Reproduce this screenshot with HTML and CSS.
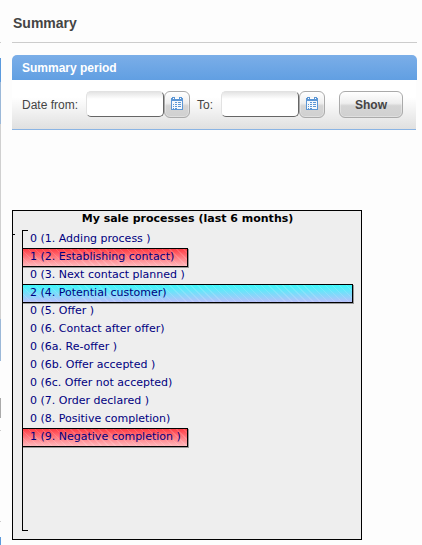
FILE: index.html
```html
<!DOCTYPE html>
<html lang="en">
<head>
    <meta charset="UTF-8">
    <meta name="viewport" content="width=device-width, initial-scale=1.0">
    <title>Summary</title>
    <link rel="stylesheet" href="styles.css">
</head>
<body>

<!-- edge of the side menu -->
<div class="side">
    <div class="side-line"></div>
    <div class="side-head"></div>
    <div class="side-box"></div>
    <div class="side-list"></div>
    <div class="side-box"></div>
    <div class="side-gap"></div>
    <div class="side-button"></div>
    <div class="side-foot"></div>
    <div class="side-end"></div>
</div>

<main>
    <h1>Summary</h1>

    <section class="panel">
        <h2>Summary period</h2>
        <form class="period">
            <label for="date-from">Date from:</label>
            <div class="date">
                <input type="text" id="date-from">
                <button type="button" class="btn btn-cal" aria-label="Choose start date">
                    <svg width="14" height="14" viewBox="0 0 14 14"><use href="#calendar"/></svg>
                </button>
            </div>
            <label for="date-to" class="to">To:</label>
            <div class="date">
                <input type="text" id="date-to">
                <button type="button" class="btn btn-cal" aria-label="Choose end date">
                    <svg width="14" height="14" viewBox="0 0 14 14"><use href="#calendar"/></svg>
                </button>
            </div>
            <button type="button" class="btn btn-show">Show</button>
        </form>
    </section>

    <section class="chart">
        <h3>My sale processes (last 6 months)</h3>
        <div class="plot">
            <ul>
                <li>0 (1. Adding process )</li>
                <li class="bar red" style="width: 50%">1 (2. Establishing contact)</li>
                <li>0 (3. Next contact planned )</li>
                <li class="bar blue" style="width: 100%">2 (4. Potential customer)</li>
                <li>0 (5. Offer )</li>
                <li>0 (6. Contact after offer)</li>
                <li>0 (6a. Re-offer )</li>
                <li>0 (6b. Offer accepted )</li>
                <li>0 (6c. Offer not accepted)</li>
                <li>0 (7. Order declared )</li>
                <li>0 (8. Positive completion)</li>
                <li class="bar red" style="width: 50%">1 (9. Negative completion )</li>
            </ul>
        </div>
    </section>
</main>

<svg class="icons" width="0" height="0">
    <symbol id="calendar" viewBox="0 0 14 14">
        <path fill="#5b96d5" d="M1 1h12v12H1z"/>
        <path fill="#5b96d5" d="M2 0h3v2H2zM9 0h3v2H9z"/>
        <path fill="#fff" d="M3 1h1v1H3zM10 1h1v1h-1zM5 1h4v1H5z"/>
        <path fill="#f4f8fc" d="M2 4h10v8H2z"/>
        <path fill="#5b96d5" d="M5 5h2v1H5zM8 5h3v1H8zM3 7h1v1H3zM5 7h2v1H5zM8 7h3v1H8zM3 9h1v1H3zM5 9h2v1H5zM8 9h3v1H8zM3 11h1v1H3zM5 11h2v1H5z"/>
    </symbol>
</svg>

</body>
</html>
```

FILE: styles.css
```css
body {
    margin: 0;
    min-height: 100vh;
    background: #fdfdfd;
    color: #444;
    font-family: "Liberation Sans", Arial, sans-serif;
    font-size: 12px;
    display: flex;
}

/* Side menu edge */
.side {
    display: flex;
    flex-direction: column;
    flex: none;
    width: 1px;
}

.side-line {
    height: 1px;
    margin: 42px 0 15px;
    background: #ccc;
}

.side-head {
    height: 24px;
    background: #5b9ade;
}

.side-box {
    height: 42px;
    background: #9bb8d8;
}

.side-list {
    height: 195px;
    background: #d0d0d0;
}

.side-gap {
    height: 37px;
}

.side-button {
    height: 20px;
    background: #aaa;
}

.side-foot {
    height: 90px;
    margin: 12px 0 15px;
    border-top: 1px solid #ccc;
    border-bottom: 1px solid #ccc;
}

.side-end {
    flex: 1;
    background: #5b9ade;
}

main {
    flex: 1;
    padding: 0 5px 5px 11px;
}

h1 {
    margin: 0 0 12px;
    padding: 15px 1px 11px;
    border-bottom: 1px solid #ccc;
    font-size: 14px;
    line-height: 16px;
}

/* Period filter */
.panel {
    margin-bottom: 80px;
}

.panel h2 {
    margin: 0;
    padding: 2px 10px 0;
    border-radius: 5px 5px 0 0;
    background: linear-gradient(#7baee8, #619fe2);
    color: #fff;
    font-size: 12px;
    line-height: 23px;
}

.period {
    display: flex;
    align-items: center;
    height: 49px;
    margin-right: 1px;
    padding-left: 10px;
    border-bottom: 1px solid #8ab4e4;
    background: linear-gradient(#fff 35%, #e0e0e0);
}

.period label {
    width: 64px;
}

.period .to {
    width: 24px;
    margin-left: 7px;
}

.date {
    display: flex;
}

.date input {
    box-sizing: border-box;
    width: 78px;
    height: 26px;
    padding: 0 5px;
    border: 1px solid #e2e2e2;
    border-right-color: #666;
    border-bottom-color: #666;
    border-radius: 5px;
    background: linear-gradient(#e4e4e4, #fff 7px);
    font: inherit;
}

.btn {
    box-sizing: border-box;
    height: 27px;
    padding: 0;
    border: 1px solid #aaa;
    border-radius: 6px;
    background: linear-gradient(#fff, #eee 45%, #d5d5d5 55%, #d0d0d0);
    box-shadow: inset 0 0 0 1px #ffffff55;
    color: #444;
    font: bold 12px "Liberation Sans", Arial, sans-serif;
}

.btn-cal {
    display: flex;
    align-items: center;
    justify-content: center;
    width: 26px;
}

.btn-cal svg {
    margin-bottom: 2px;
}

.btn-show {
    width: 64px;
    margin-left: 14px;
}

/* Chart */
.chart {
    box-sizing: border-box;
    max-width: 350px;
    padding: 0 8px 8px 9px;
    border: 1px solid #000;
    background: #eee;
    color: #000080;
    font-family: "DejaVu Sans", Verdana, sans-serif;
    font-size: 11px;
}

.chart h3 {
    margin: 0 0 4px;
    color: #000;
    font-size: 11px;
    line-height: 15px;
    text-align: center;
}

.plot {
    position: relative;
    min-height: 301px;
}

/* axis bracket */
.plot::before {
    content: "";
    position: absolute;
    top: 0;
    bottom: 0;
    left: 0;
    width: 5px;
    border: 1px solid #000;
    border-right: 0;
}

/* axis tick */
.plot::after {
    content: "";
    position: absolute;
    top: 4px;
    left: -9px;
    width: 2px;
    height: 1px;
    background: #000;
}

.plot ul {
    position: relative;
    margin: 0;
    padding: 0;
    list-style: none;
}

.plot li {
    box-sizing: border-box;
    height: 18px;
    padding-left: 8px;
    line-height: 17px;
    white-space: nowrap;
}

.plot .bar {
    height: 19px;
    margin-bottom: -1px;
    padding-left: 7px;
    border: 1px solid #000;
    box-shadow: 1px 1px #999;
    line-height: 15px;
}

.red {
    background: repeating-linear-gradient(45deg, #ffffff22 0 1px, transparent 1px 5px), linear-gradient(#ff3c44, #ffb8bc);
}

.blue {
    background: repeating-linear-gradient(45deg, #ffffff22 0 1px, transparent 1px 5px), linear-gradient(#3cf8fa, #b8c0fa);
}
```
